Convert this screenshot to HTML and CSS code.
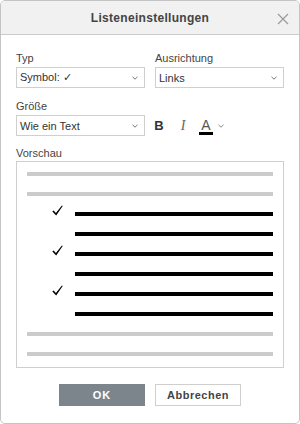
FILE: index.html
```html
<!DOCTYPE html>
<html lang="de">
<head>
    <meta charset="UTF-8">
    <title>Listeneinstellungen</title>
    <link rel="stylesheet" href="styles.css">
</head>
<body>
    <div class="dialog">
        <div class="dialog-header">
            <span class="dialog-title">Listeneinstellungen</span>
            <svg class="close" width="12" height="12" viewBox="0 0 12 12">
                <path d="M1 1 L11 11 M11 1 L1 11" stroke="#9a9a9a" stroke-width="1.2" fill="none"/>
            </svg>
        </div>

        <div class="dialog-body">
            <div class="form-grid">
                <div class="field">
                    <label>Typ</label>
                    <div class="select">
                        <span>Symbol: ✓</span>
                        <svg class="caret" width="6" height="4" viewBox="0 0 6 4"><path d="M0.5 0.8 L3 3.2 L5.5 0.8" stroke="#777" fill="none"/></svg>
                    </div>
                </div>
                <div class="field">
                    <label>Ausrichtung</label>
                    <div class="select">
                        <span>Links</span>
                        <svg class="caret" width="6" height="4" viewBox="0 0 6 4"><path d="M0.5 0.8 L3 3.2 L5.5 0.8" stroke="#777" fill="none"/></svg>
                    </div>
                </div>
                <div class="field">
                    <label>Größe</label>
                    <div class="select">
                        <span>Wie ein Text</span>
                        <svg class="caret" width="6" height="4" viewBox="0 0 6 4"><path d="M0.5 0.8 L3 3.2 L5.5 0.8" stroke="#777" fill="none"/></svg>
                    </div>
                </div>
                <div class="field toolbar-field">
                    <div class="toolbar">
                        <span class="tb tb-bold">B</span>
                        <span class="tb tb-italic">I</span>
                        <span class="tb tb-color">A<i class="color-bar"></i></span>
                        <svg class="tb-caret" width="6" height="4" viewBox="0 0 6 4"><path d="M0.5 0.8 L3 3.2 L5.5 0.8" stroke="#888" fill="none"/></svg>
                    </div>
                </div>
            </div>

            <label class="preview-label">Vorschau</label>
            <div class="preview">
                <div class="line gray"></div>
                <div class="line gray"></div>
                <div class="item">
                    <svg class="check" width="11" height="11" viewBox="0 0 11 11"><path d="M0.3 6.4 L1.6 5.4 L3.9 7.9 L9.9 0.4 L10.7 1 L4.2 10.6 Z" fill="#000"/></svg>
                    <div class="bar"></div>
                </div>
                <div class="item"><div class="bar"></div></div>
                <div class="item">
                    <svg class="check" width="11" height="11" viewBox="0 0 11 11"><path d="M0.3 6.4 L1.6 5.4 L3.9 7.9 L9.9 0.4 L10.7 1 L4.2 10.6 Z" fill="#000"/></svg>
                    <div class="bar"></div>
                </div>
                <div class="item"><div class="bar"></div></div>
                <div class="item">
                    <svg class="check" width="11" height="11" viewBox="0 0 11 11"><path d="M0.3 6.4 L1.6 5.4 L3.9 7.9 L9.9 0.4 L10.7 1 L4.2 10.6 Z" fill="#000"/></svg>
                    <div class="bar"></div>
                </div>
                <div class="item"><div class="bar"></div></div>
                <div class="line gray"></div>
                <div class="line gray"></div>
            </div>
        </div>

        <div class="dialog-footer">
            <button class="btn btn-primary">OK</button>
            <button class="btn btn-default">Abbrechen</button>
        </div>
    </div>
</body>
</html>
```

FILE: styles.css
```css
body {
    margin: 0;
    font-family: "Liberation Sans", Arial, sans-serif;
    font-size: 11px;
    color: #444;
    background: #fff;
}

.dialog {
    width: 300px;
    height: 424px;
    box-sizing: border-box;
    border: 1px solid #c4c4c4;
    border-radius: 5px;
    overflow: hidden;
    display: flex;
    flex-direction: column;
}

.dialog-header {
    height: 33px;
    background: #f1f1f1;
    border-bottom: 1px solid #cbcbcb;
    display: flex;
    align-items: center;
    justify-content: center;
    position: relative;
}

.dialog-title {
    font-size: 12px;
    font-weight: bold;
    color: #444;
    letter-spacing: 0.3px;
    padding-top: 1px;
}

.close {
    position: absolute;
    right: 10px;
    top: 12px;
}

.dialog-body {
    padding: 15px 15px 0;
}

.form-grid {
    display: grid;
    grid-template-columns: 129px 129px;
    column-gap: 10px;
    row-gap: 10px;
}

.field label,
.preview-label {
    display: block;
    line-height: 16px;
    margin-bottom: 1px;
}

.select {
    height: 21px;
    box-sizing: border-box;
    border: 1px solid #cfcfcf;
    display: flex;
    align-items: center;
    justify-content: space-between;
    padding: 0 6px 0 3px;
    color: #333;
}

.caret {
    margin-top: 1px;
}

.toolbar-field {
    display: flex;
    align-items: flex-end;
}

.toolbar {
    display: flex;
    align-items: center;
    height: 21px;
    margin-left: -6px;
}

.tb {
    width: 20px;
    text-align: center;
    color: #333;
    font-size: 13px;
    line-height: 21px;
}

.tb-bold {
    font-weight: bold;
}

.tb-italic {
    margin-left: 4px;
    font-family: "Liberation Serif", "Times New Roman", serif;
    font-style: italic;
    font-size: 14px;
    color: #666;
}

.tb-color {
    margin-left: 4px;
    width: 18px;
    font-size: 14px;
    color: #555;
    display: flex;
    flex-direction: column;
    align-items: center;
    line-height: 14px;
    padding-top: 1px;
}

.color-bar {
    display: block;
    width: 14px;
    height: 3px;
    background: #000;
    margin-top: 0;
}

.tb-caret {
    margin-left: 3px;
}

.preview-label {
    margin-top: 9px;
    margin-bottom: 0;
}

.preview {
    border: 1px solid #cfcfcf;
    padding: 10px 10px 11px;
    display: flex;
    flex-direction: column;
    gap: 16px;
}

.line {
    height: 4px;
}

.gray {
    background: #cbcbcb;
}

.item {
    height: 4px;
    display: flex;
    align-items: flex-end;
    padding-left: 48px;
}

.check {
    flex: none;
    margin-left: -23px;
    margin-right: 12px;
}

.bar {
    flex: 1;
    height: 4px;
    background: #000;
}

.dialog-footer {
    display: flex;
    justify-content: center;
    gap: 10px;
    margin-top: 16px;
}

.btn {
    width: 86px;
    height: 22px;
    box-sizing: border-box;
    font-family: "Liberation Sans", Arial, sans-serif;
    font-size: 11px;
    font-weight: bold;
    padding: 0;
    cursor: pointer;
}

.btn-primary {
    background: #7d858c;
    border: none;
    color: #fff;
    letter-spacing: 1px;
}

.btn-default {
    background: #fff;
    border: 1px solid #cfcfcf;
    color: #444;
    letter-spacing: 0.5px;
}
```
